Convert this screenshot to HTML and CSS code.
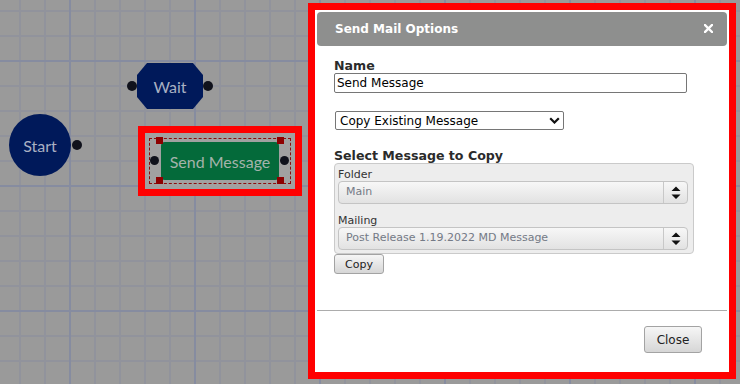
FILE: index.html
```html
<!DOCTYPE html>
<html>
<head>
<meta charset="utf-8">
<link rel="stylesheet" href="styles.css">
</head>
<body>
<div class="canvas">
  <div class="node node-start">Start</div>
  <span class="port port-start"></span>

  <span class="port port-wait-in"></span>
  <div class="node node-wait">Wait</div>
  <span class="port port-wait-out"></span>

  <div class="node-box">
    <div class="selection"></div>
    <div class="node node-send">Send Message</div>
    <span class="handle handle-tl"></span>
    <span class="handle handle-tr"></span>
    <span class="handle handle-bl"></span>
    <span class="handle handle-br"></span>
    <span class="port port-send-in"></span>
    <span class="port port-send-out"></span>
  </div>
  <div class="mark mark-node"></div>

  <div class="dialog">
    <div class="titlebar">
      <span class="title">Send Mail Options</span>
      <span class="title-close">
        <svg width="9" height="9" viewBox="0 0 9 9"><path d="M1 1 L8 8 M8 1 L1 8" stroke="#fff" stroke-width="2.4" stroke-linecap="square"/></svg>
      </span>
    </div>
    <div class="content">
      <div class="field-label">Name</div>
      <input class="name-input" type="text" value="Send Message">
      <div class="mode-wrap">
        <select class="mode-select"><option>Copy Existing Message</option></select>
        <svg class="chevron" width="11" height="7" viewBox="0 0 11 7"><path d="M1.2 1.2 L5.5 5.5 L9.8 1.2" fill="none" stroke="#111" stroke-width="2.2"/></svg>
      </div>
      <div class="section-title">Select Message to Copy</div>
      <div class="picker">
        <div class="sub-label">Folder</div>
        <div class="sbox">
          <span class="sbox-text">Main</span>
          <span class="sbox-arrow"><svg width="10" height="14" viewBox="0 0 10 14"><path d="M0.5 5 L5 0.5 L9.5 5 Z M0.5 8.5 L9.5 8.5 L5 13 Z" fill="#111"/></svg></span>
        </div>
        <div class="sub-label sub-label-second">Mailing</div>
        <div class="sbox">
          <span class="sbox-text">Post Release 1.19.2022 MD Message</span>
          <span class="sbox-arrow"><svg width="10" height="14" viewBox="0 0 10 14"><path d="M0.5 5 L5 0.5 L9.5 5 Z M0.5 8.5 L9.5 8.5 L5 13 Z" fill="#111"/></svg></span>
        </div>
      </div>
      <button class="btn btn-copy">Copy</button>
    </div>
    <div class="buttonpane">
      <button class="btn btn-close">Close</button>
    </div>
  </div>
  <div class="mark mark-dialog"></div>
</div>
</body>
</html>
```
FILE: styles.css
```css
* { box-sizing: border-box; }
html, body { margin: 0; padding: 0; }
body { width: 740px; height: 384px; overflow: hidden; font-family: "DejaVu Sans", Verdana, sans-serif; }

.canvas {
  position: relative;
  width: 740px;
  height: 384px;
  background-color: #9a9a9a;
  background-image:
    linear-gradient(to right, #868ca0 2px, transparent 2px),
    linear-gradient(to bottom, #868ca0 2px, transparent 2px),
    linear-gradient(to right, #91939c 2px, transparent 2px),
    linear-gradient(to bottom, #91939c 2px, transparent 2px);
  background-size: 125px 125px, 125px 125px, 25px 25px, 25px 25px;
  background-position: 69px 60px, 69px 60px, 19px 10px, 19px 10px;
}

/* diagram nodes */
.node {
  position: absolute;
  display: flex;
  align-items: center;
  justify-content: center;
  font-family: Lato, "Open Sans", sans-serif;
  font-size: 16px;
  color: #a9b0c3;
}
.node-start {
  left: 9px; top: 114px;
  width: 62px; height: 62px;
  border-radius: 50%;
  background: #00195a;
}
.node-wait {
  left: 137px; top: 63px;
  width: 66px; height: 46px;
  background: #00195a;
  clip-path: polygon(10px 0, 56px 0, 66px 12px, 66px 34px, 56px 46px, 10px 46px, 0 34px, 0 12px);
}
.port {
  position: absolute;
  width: 10px; height: 10px;
  border-radius: 50%;
  background: #10121c;
}
.port-start { left: 72px; top: 140px; }
.port-wait-in { left: 127px; top: 81px; }
.port-wait-out { left: 203px; top: 81px; }

.node-box {
  position: absolute;
  left: 145px; top: 133px;
  width: 150px; height: 56px;
  background: #a1a1a1;
}
.selection {
  position: absolute;
  left: 4px; top: 5px;
  width: 142px; height: 46px;
  border: 1px dashed #8e0c0c;
}
.node-send {
  left: 16px; top: 9px;
  width: 118px; height: 38px;
  border-radius: 4px;
  background: #046a3a;
  color: #a3b3ab;
}
.handle {
  position: absolute;
  width: 7px; height: 7px;
  background: #8e0000;
}
.handle-tl { left: 11px; top: 4px; }
.handle-tr { left: 132px; top: 4px; }
.handle-bl { left: 11px; top: 44px; }
.handle-br { left: 132px; top: 44px; }
.port-send-in { left: 5px; top: 23px; width: 9px; height: 9px; }
.port-send-out { left: 135px; top: 23px; width: 9px; height: 9px; }

/* annotation frames */
.mark {
  position: absolute;
  border: 7px solid #ff0000;
}
.mark-node { left: 138px; top: 126px; width: 164px; height: 70px; }
.mark-dialog { left: 308px; top: 3px; width: 428px; height: 376px; }

/* dialog */
.dialog {
  position: absolute;
  left: 315px; top: 10px;
  width: 414px; height: 362px;
  padding: 2px;
  background: #ffffff;
  display: flex;
  flex-direction: column;
}
.titlebar {
  height: 34px;
  flex: none;
  background: #8e8f8e;
  border-radius: 4px;
  display: flex;
  align-items: center;
  justify-content: space-between;
  padding: 0 14px 1px 18px;
}
.title {
  color: #ffffff;
  font-weight: bold;
  font-size: 12px;
}
.title-close { display: flex; }

.content {
  height: 264px;
  flex: none;
  padding: 12px 0 0 17px;
  display: flex;
  flex-direction: column;
  align-items: flex-start;
}
.field-label, .section-title {
  font-weight: bold;
  font-size: 12.6px;
  line-height: 15px;
  color: #2b2b2b;
}
.name-input {
  width: 353px;
  height: 20px;
  margin: 0;
  padding: 0 2px;
  border: 1px solid #767676;
  border-radius: 2px;
  font-family: "DejaVu Sans", sans-serif;
  font-size: 12px;
  color: #000;
  background: #fff;
}
.mode-wrap {
  position: relative;
  margin: 18px 0 0 1px;
}
.mode-select {
  display: block;
  width: 229px;
  height: 19px;
  margin: 0;
  padding: 0 0 0 4px;
  -webkit-appearance: none;
  appearance: none;
  border: 1px solid #767676;
  border-radius: 2px;
  background: #fff;
  font-family: "DejaVu Sans", sans-serif;
  font-size: 12px;
  color: #000;
}
.chevron {
  position: absolute;
  right: 4px;
  top: 6px;
}
.section-title { margin-top: 18px; }
.picker {
  width: 360px;
  padding: 4px 5px 3px 3px;
  background: #ededed;
  border: 1px solid #cacaca;
  border-radius: 4px;
}
.sub-label {
  font-size: 11px;
  line-height: 13px;
  color: #333;
}
.sub-label-second { margin-top: 10px; }
.sbox {
  display: flex;
  height: 23px;
  border: 1px solid #c4c4c4;
  border-radius: 4px;
  background: linear-gradient(to bottom, #f7f7f7, #e2e2e2);
}
.sbox-text {
  flex: 1;
  padding-left: 7px;
  font-size: 11px;
  line-height: 20px;
  color: #747a86;
}
.sbox-arrow {
  width: 24px;
  border-left: 1px solid #c8c8c8;
  display: flex;
  align-items: center;
  justify-content: center;
}
.btn {
  margin: 0;
  font-family: "DejaVu Sans", sans-serif;
  color: #222;
  border: 1px solid #a3a3a3;
  border-radius: 3px;
  background: linear-gradient(to bottom, #f6f6f6, #d6d6d6);
  padding: 0;
}
.btn-copy {
  width: 50px;
  height: 20px;
  font-size: 11px;
}
.buttonpane {
  border-top: 1px solid #acacac;
  padding: 15px 25px 0 0;
  display: flex;
  justify-content: flex-end;
}
.btn-close {
  width: 58px;
  height: 27px;
  font-size: 12px;
}
```
